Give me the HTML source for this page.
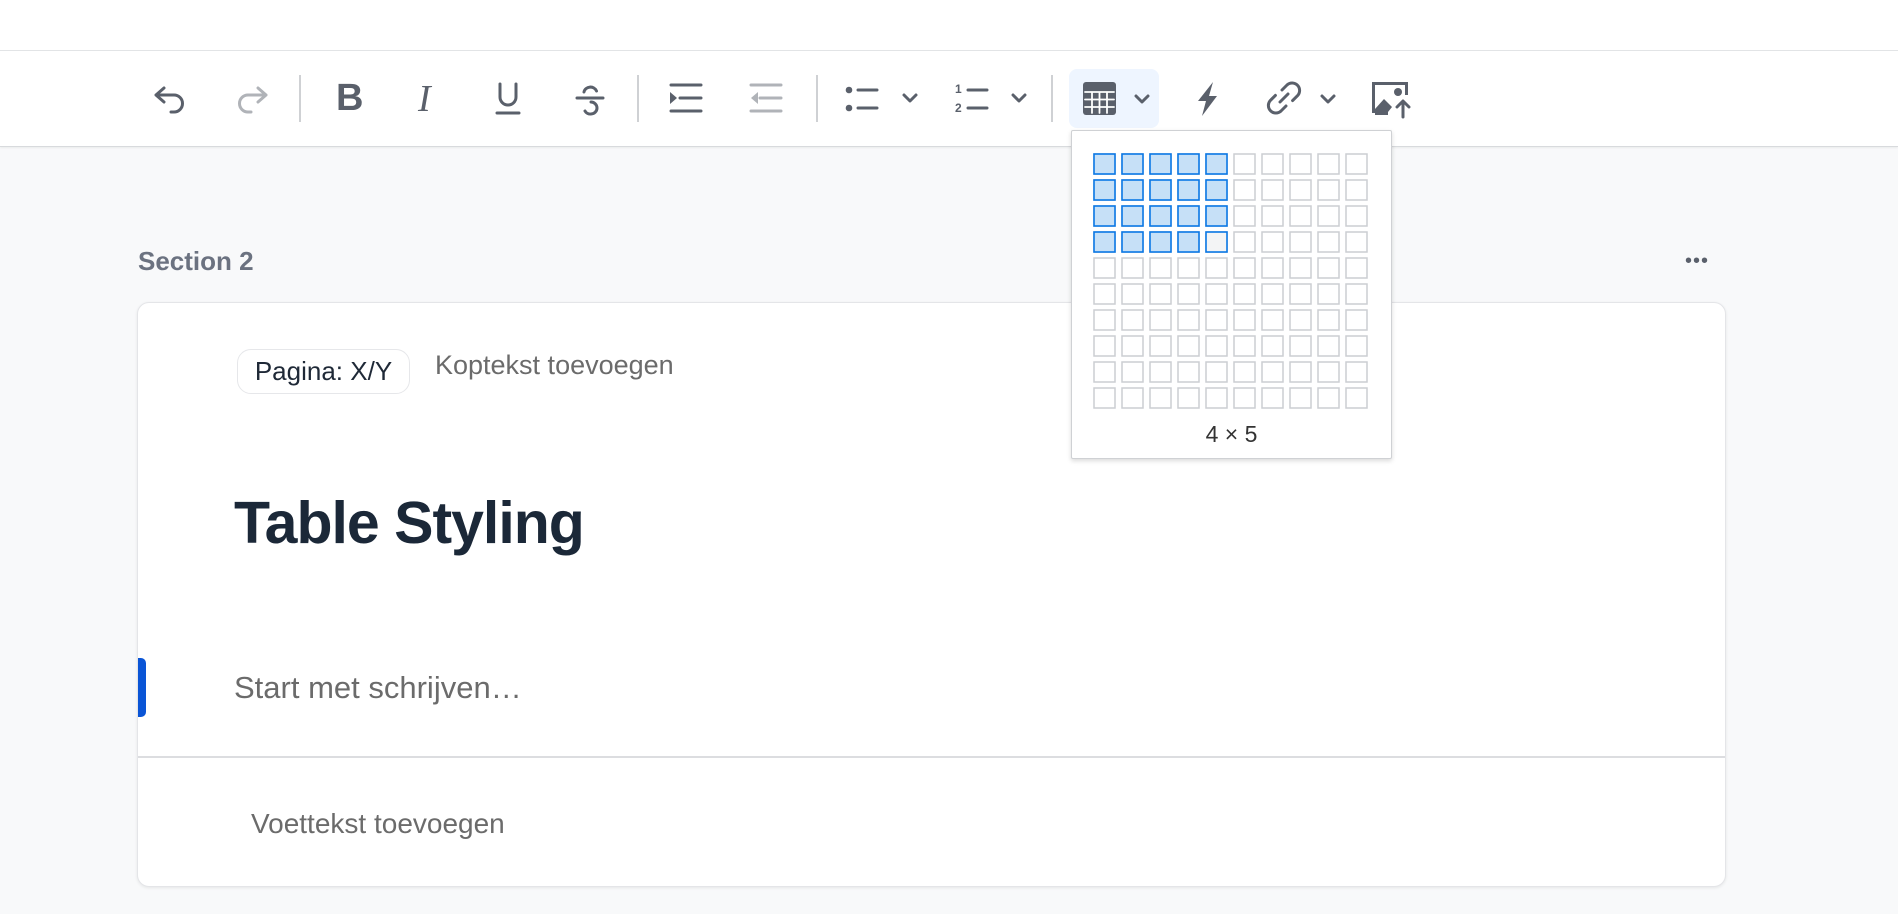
<!DOCTYPE html>
<html><head><meta charset="utf-8"><style>
*{margin:0;padding:0;box-sizing:border-box}
body{width:1898px;height:914px;background:#f8f9fa;font-family:"Liberation Sans",sans-serif;position:relative;overflow:hidden}
.top{position:absolute;left:0;top:0;width:1898px;height:51px;background:#fff;border-bottom:1px solid #e3e4e6}
.tb{position:absolute;left:0;top:51px;width:1898px;height:96px;background:#fff;border-bottom:1px solid #d8dadd;box-shadow:0 1px 2px rgba(0,0,0,.06)}
.sep{position:absolute;top:75px;width:2px;height:47px;background:#cfd1d4}
.abs{position:absolute}
.card{position:absolute;left:137px;top:302px;width:1589px;height:585px;background:#fff;border:1px solid #e4e5e8;border-radius:12px;box-shadow:0 1px 3px rgba(0,0,0,.08)}
</style></head><body>
<div class="top"></div>
<div class="tb"></div>
<div class="abs" style="left:1069px;top:69px;width:90px;height:59px;background:#eef5ff;border-radius:8px"></div>
<svg class="abs" style="left:0;top:0" width="1898" height="150" fill="none" stroke="#5a606b" stroke-width="3" stroke-linecap="round" stroke-linejoin="round">
<g transform="translate(171,98)"><path d="M-7 -10 l-8 7 l8 7 M-15 -3 h18 a8.5 8.5 0 0 1 0 17 h-3"/></g>
<g transform="translate(251,98)" stroke="#b0b3b8"><path d="M7 -10 l8 7 l-8 7 M15 -3 h-18 a8.5 8.5 0 0 0 0 17 h3"/></g>
<g transform="translate(508,98)"><path d="M-8 -14 v13 a8 8 0 0 0 16 0 v-13 M-11 15 h22"/></g>
<g transform="translate(590,98)"><path d="M-6 -6 a6.5 6 0 0 1 12.5 -1 M-13 0 h26 M1 4 a6 6 0 0 1 0 12 a6 6 0 0 1 -6 -3"/></g>
<g transform="translate(686,98)"><path d="M-15 -13 h30 M-6 0 h21 M-15 13 h30"/><path fill="#5a606b" stroke="none" d="M-16 -6 l7 6 l-7 6z"/></g>
<g transform="translate(766,98)" stroke="#b0b3b8"><path d="M-15 -13 h30 M-6 0 h21 M-15 13 h30"/><path fill="#b0b3b8" stroke="none" d="M-8 -6 l-7 6 l7 6z"/></g>
<g transform="translate(862,98)"><circle cx="-13" cy="-8" r="3.3" fill="#5a606b" stroke="none"/><circle cx="-13" cy="10" r="3.3" fill="#5a606b" stroke="none"/><path d="M-4 -8 h19 M-4 10 h19"/></g>
<path d="M904 95 l6 6 l6 -6"/>
<g transform="translate(971,98)"><path d="M-3 -8 h19 M-3 10 h19"/></g>
<path d="M1013 95 l6 6 l6 -6"/>
<rect x="1083" y="82" width="33" height="33" rx="3" fill="#5a606b" stroke="none"/>
<path stroke="#fff" stroke-width="1.8" d="M1085 92 h29 M1085 99.5 h29 M1085 107 h29 M1092 92 v21 M1099.5 92 v21 M1107 92 v21"/>
<path d="M1136 96 l6 6 l6 -6"/>
<path fill="#5a606b" stroke="none" d="M1213 82 l-15 19 h8 l-4 15 l15 -20 h-8z"/>
<g transform="translate(1284,98)"><path d="M-2 -8 l5 -5 a7.5 7.5 0 0 1 10.6 10.6 l-5 5 M2 8 l-5 5 a7.5 7.5 0 0 1 -10.6 -10.6 l5 -5 M-4 4 l8 -8"/></g>
<path d="M1322 96 l6 6 l6 -6"/>
<path fill="#5a606b" stroke="none" d="M1372 82 h36 v13 h-3 v-10 h-30 v24 h8 v4 h-11z"/>
<path fill="#5a606b" stroke="none" d="M1375 109 l9 -10 l8 8 l-4 5 v3 h-13z"/>
<circle cx="1398" cy="92" r="4" fill="#5a606b" stroke="none"/>
<path d="M1403 117 v-15 M1397 107 l6 -6 l6 6"/>
</svg>
<div class="abs" style="left:336px;top:77px;font-size:38px;font-weight:bold;color:#5a606b">B</div>
<div class="abs" style="left:418px;top:77px;font-size:38px;font-style:italic;font-family:'Liberation Serif',serif;color:#5a606b">I</div>
<div class="abs" style="left:955px;top:80px;font-size:12px;font-weight:bold;color:#5a606b;line-height:19px">1<br>2</div>
<div class="sep" style="left:299px"></div>
<div class="sep" style="left:637px"></div>
<div class="sep" style="left:816px"></div>
<div class="sep" style="left:1051px"></div>

<div class="abs" style="left:138px;top:246px;font-size:26px;font-weight:bold;color:#6b7280">Section 2</div>
<div class="abs" style="left:1685px;top:250px;font-size:20px;color:#5a606b;letter-spacing:1px">•••</div>

<div class="card"></div>
<div class="abs" style="left:237px;top:349px;width:173px;height:45px;border:1.5px solid #e6e7ea;border-radius:14px;font-size:26px;color:#1f2937;text-align:center;line-height:42px">Pagina: X/Y</div>
<div class="abs" style="left:435px;top:350px;font-size:27px;color:#6b6b6b">Koptekst toevoegen</div>
<div class="abs" style="left:234px;top:489px;font-size:59px;font-weight:bold;color:#1b2838;letter-spacing:-1px">Table Styling</div>
<div class="abs" style="left:138px;top:658px;width:8px;height:59px;background:#0a55d6;border-radius:0 5px 5px 0"></div>
<div class="abs" style="left:234px;top:670px;font-size:31px;color:#6b6b6b">Start met schrijven…</div>
<div class="abs" style="left:138px;top:756px;width:1587px;height:2px;background:#dcdde0"></div>
<div class="abs" style="left:251px;top:808px;font-size:28px;color:#6b6b6b">Voettekst toevoegen</div>

<div class="abs" style="left:1071px;top:130px;width:321px;height:329px;background:#fff;border:1.5px solid #cfd1d4;border-radius:2px;box-shadow:0 2px 5px rgba(0,0,0,.15)">
<svg style="position:absolute;left:21px;top:22px" width="280" height="262">
<defs><pattern id="p" width="28" height="26" patternUnits="userSpaceOnUse"><rect x="1" y="1" width="21" height="20" fill="#fff" stroke="#ccced2" stroke-width="1.5"/></pattern></defs>
<rect width="280" height="260" fill="url(#p)"/>
<g fill="#c6e0f7" stroke="#0a78e6" stroke-width="1.6">
<rect x="1" y="1" width="21" height="20"/><rect x="29" y="1" width="21" height="20"/><rect x="57" y="1" width="21" height="20"/><rect x="85" y="1" width="21" height="20"/><rect x="113" y="1" width="21" height="20"/>
<rect x="1" y="27" width="21" height="20"/><rect x="29" y="27" width="21" height="20"/><rect x="57" y="27" width="21" height="20"/><rect x="85" y="27" width="21" height="20"/><rect x="113" y="27" width="21" height="20"/>
<rect x="1" y="53" width="21" height="20"/><rect x="29" y="53" width="21" height="20"/><rect x="57" y="53" width="21" height="20"/><rect x="85" y="53" width="21" height="20"/><rect x="113" y="53" width="21" height="20"/>
<rect x="1" y="79" width="21" height="20"/><rect x="29" y="79" width="21" height="20"/><rect x="57" y="79" width="21" height="20"/><rect x="85" y="79" width="21" height="20"/><rect x="113" y="79" width="21" height="20" fill="#f3f4f5"/>
</g></svg>
<div style="position:absolute;left:0;width:100%;top:290px;text-align:center;font-size:23px;color:#333">4 × 5</div>
</div>
</body></html>
